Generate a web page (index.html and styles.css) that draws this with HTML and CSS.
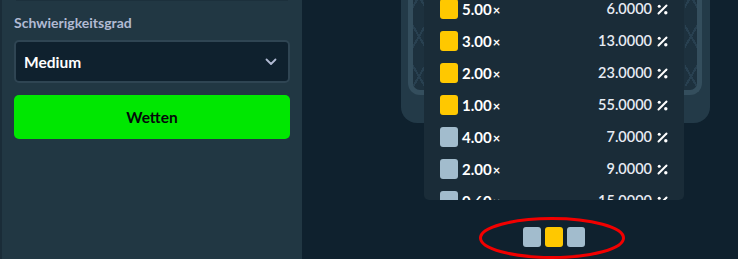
FILE: index.html
```html
<!DOCTYPE html>
<html lang="de">
<head>
<meta charset="utf-8">
<title>Keno</title>
<link rel="stylesheet" href="styles.css">
</head>
<body>
<aside class="sidebar">
  <div class="topline"></div>
  <label class="label">Schwierigkeitsgrad</label>
  <div class="select">
    <span>Medium</span>
    <svg class="chev" width="12" height="8" viewBox="0 0 12 8"><path d="M1.5 1.5 L6 6 L10.5 1.5" fill="none" stroke="#b1bad3" stroke-width="1.8" stroke-linecap="round" stroke-linejoin="round"/></svg>
  </div>
  <button class="bet">Wetten</button>
</aside>
<main class="main">
  <div class="board">
    <div class="rail">
      <div class="pattern left"></div>
      <div class="pattern right"></div>
    </div>
    <div class="panel">
      <div class="rows">
        <div class="row"><span class="sw gold"></span><span class="mult">5.00<small>×</small></span><span class="pct">6.0000</span><svg class="pi" width="11" height="11" viewBox="0 0 11 11"><path d="M9.5 1.5 L1.5 9.5" stroke="#fff" stroke-width="2" stroke-linecap="round"/><circle cx="2.2" cy="2.2" r="1.5" fill="#fff"/><circle cx="8.8" cy="8.8" r="1.7" fill="#fff"/></svg></div>
        <div class="row"><span class="sw gold"></span><span class="mult">3.00<small>×</small></span><span class="pct">13.0000</span><svg class="pi" width="11" height="11" viewBox="0 0 11 11"><path d="M9.5 1.5 L1.5 9.5" stroke="#fff" stroke-width="2" stroke-linecap="round"/><circle cx="2.2" cy="2.2" r="1.5" fill="#fff"/><circle cx="8.8" cy="8.8" r="1.7" fill="#fff"/></svg></div>
        <div class="row"><span class="sw gold"></span><span class="mult">2.00<small>×</small></span><span class="pct">23.0000</span><svg class="pi" width="11" height="11" viewBox="0 0 11 11"><path d="M9.5 1.5 L1.5 9.5" stroke="#fff" stroke-width="2" stroke-linecap="round"/><circle cx="2.2" cy="2.2" r="1.5" fill="#fff"/><circle cx="8.8" cy="8.8" r="1.7" fill="#fff"/></svg></div>
        <div class="row"><span class="sw gold"></span><span class="mult">1.00<small>×</small></span><span class="pct">55.0000</span><svg class="pi" width="11" height="11" viewBox="0 0 11 11"><path d="M9.5 1.5 L1.5 9.5" stroke="#fff" stroke-width="2" stroke-linecap="round"/><circle cx="2.2" cy="2.2" r="1.5" fill="#fff"/><circle cx="8.8" cy="8.8" r="1.7" fill="#fff"/></svg></div>
        <div class="row"><span class="sw gray"></span><span class="mult">4.00<small>×</small></span><span class="pct">7.0000</span><svg class="pi" width="11" height="11" viewBox="0 0 11 11"><path d="M9.5 1.5 L1.5 9.5" stroke="#fff" stroke-width="2" stroke-linecap="round"/><circle cx="2.2" cy="2.2" r="1.5" fill="#fff"/><circle cx="8.8" cy="8.8" r="1.7" fill="#fff"/></svg></div>
        <div class="row"><span class="sw gray"></span><span class="mult">2.00<small>×</small></span><span class="pct">9.0000</span><svg class="pi" width="11" height="11" viewBox="0 0 11 11"><path d="M9.5 1.5 L1.5 9.5" stroke="#fff" stroke-width="2" stroke-linecap="round"/><circle cx="2.2" cy="2.2" r="1.5" fill="#fff"/><circle cx="8.8" cy="8.8" r="1.7" fill="#fff"/></svg></div>
        <div class="row"><span class="sw gray"></span><span class="mult">0.60<small>×</small></span><span class="pct">15.0000</span><svg class="pi" width="11" height="11" viewBox="0 0 11 11"><path d="M9.5 1.5 L1.5 9.5" stroke="#fff" stroke-width="2" stroke-linecap="round"/><circle cx="2.2" cy="2.2" r="1.5" fill="#fff"/><circle cx="8.8" cy="8.8" r="1.7" fill="#fff"/></svg></div>
      </div>
    </div>
  </div>
  <div class="chips">
    <span class="sw gray"></span><span class="sw gold"></span><span class="sw gray"></span>
    <svg class="ring" width="148" height="44" viewBox="0 0 148 44"><ellipse cx="74" cy="22" rx="71.5" ry="19.5" fill="none" stroke="#f20000" stroke-width="3"/></svg>
  </div>
</main>
</body>
</html>
```

FILE: styles.css
```css
* { box-sizing: border-box; }
html, body { margin: 0; padding: 0; }
body {
  width: 738px;
  height: 259px;
  overflow: hidden;
  background: #0f212e;
  display: flex;
  font-family: "Lato", "Liberation Sans", sans-serif;
}
.sidebar {
  width: 302px;
  flex: none;
  background: #213743;
  border-left: 2px solid #1a2c38;
  padding: 0 12px 0 12px;
  display: flex;
  flex-direction: column;
}
.topline {
  height: 1px;
  background: #1c303c;
  margin: 0 2px 0 2px;
}
.label {
  margin-top: 14px;
  font-size: 14px;
  font-weight: 700;
  color: #b1bad3;
  line-height: 16px;
  height: 16px;
}
.select {
  margin-top: 9px;
  height: 43px;
  border: 2px solid #2f4553;
  border-radius: 5px;
  background: #0f212e;
  display: flex;
  align-items: center;
  justify-content: space-between;
  padding: 0 11px 0 8px;
  color: #fff;
  font-size: 15.5px;
  font-weight: 700;
}
.chev { display: block; }
.bet {
  margin-top: 12px;
  height: 44px;
  border: none;
  border-radius: 5px;
  background: #00e701;
  color: #05080a;
  font-family: inherit;
  font-size: 15.5px;
  font-weight: 700;
  padding: 0;
}
.main {
  flex: 1;
  display: flex;
  flex-direction: column;
  align-items: center;
  padding-left: 68px;
}
.board {
  position: relative;
  width: 309px;
  height: 123px;
  margin-left: 3px;
  background: #233a48;
  border-radius: 0 0 16px 16px;
  flex: none;
}
.rail {
  position: absolute;
  left: 7px;
  right: 8px;
  top: 0;
  height: 95px;
  border: 5px solid #344e5d;
  border-top: none;
  border-radius: 0 0 12px 12px;
  background: #1d313e;
}
.pattern {
  position: absolute;
  top: 0;
  bottom: 4px;
  width: 12px;
  background:
    repeating-linear-gradient(60deg, transparent 0 9px, #284050 9px 11px, transparent 11px 20px),
    repeating-linear-gradient(-60deg, transparent 0 9px, #284050 9px 11px, transparent 11px 20px);
}
.pattern.left { left: 0; }
.pattern.right { right: 0; }
.panel {
  position: absolute;
  left: 23px;
  top: 0;
  width: 260px;
  height: 200px;
  background: #1a2c38;
  border-radius: 0 0 5px 5px;
  overflow: hidden;
}
.rows {
  margin-top: -1px;
  padding: 0 16px;
}
.row {
  height: 32px;
  display: flex;
  align-items: flex-start;
}
.sw {
  display: block;
  width: 18px;
  height: 20px;
  border-radius: 3px;
  flex: none;
}
.gold { background: #ffc800; }
.gray { background: #a2bccd; }
.mult {
  margin-left: 4px;
  color: #fff;
  font-size: 15px;
  font-weight: 700;
  line-height: 20px;
}
.mult small {
  font-size: 13px;
  font-weight: 700;
  margin-left: 1px;
}
.pct {
  margin-left: auto;
  color: #e6ebf3;
  font-size: 14.5px;
  font-weight: 600;
  line-height: 20px;
}
.pi {
  margin: 5px 0 0 5px;
  flex: none;
}
.chips {
  position: relative;
  margin-top: 104px;
  display: flex;
  gap: 4px;
}
.ring {
  position: absolute;
  left: -45px;
  top: -11px;
}
```
